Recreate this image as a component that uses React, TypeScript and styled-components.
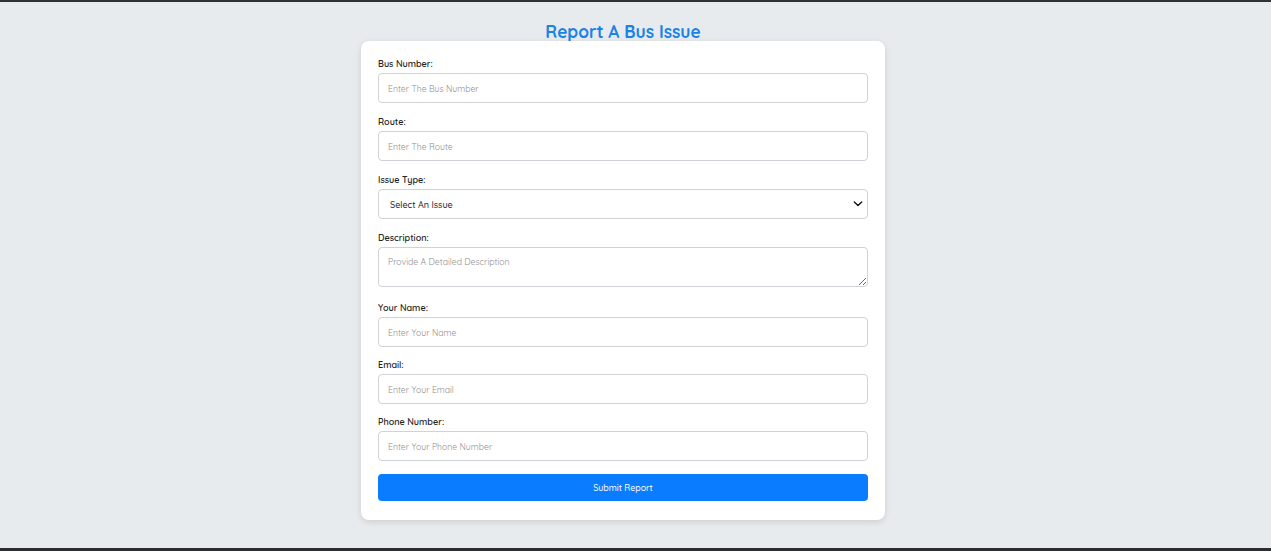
import React from "react";
import styled, { createGlobalStyle } from "styled-components";

const GlobalStyle = createGlobalStyle`
  html, body {
    margin: 0;
    padding: 0;
    background: #e8ebee;
    font-family: "Quicksand", Inter, "Noto Sans", sans-serif;
  }
  * { box-sizing: border-box; }
`;

const Page = styled.div`
  width: 1271px;
  height: 551px;
  display: flex;
  flex-direction: column;
  background: #e8ebee;
  border-top: 2px solid #2f3135;
  border-bottom: 3px solid #2a2c30;
  padding-right: 25px;
  overflow: hidden;
`;

const Main = styled.main`
  flex: 1;
  display: flex;
  flex-direction: column;
  align-items: center;
`;

const Title = styled.h1`
  margin: 20px 0 0;
  height: 19px;
  line-height: 19px;
  font-size: 17.3px;
  font-weight: 700;
  color: #1b82e6;
`;

const Card = styled.form`
  width: 524px;
  background: #fff;
  border-radius: 8px;
  box-shadow: 0 2px 6px rgba(0, 0, 0, 0.12);
  padding: 17px 17px 19px;
  display: flex;
  flex-direction: column;
`;

const Group = styled.div<{ $mb?: number }>`
  display: flex;
  flex-direction: column;
  margin-bottom: ${(p) => p.$mb ?? 13}px;
`;

const Label = styled.label`
  height: 12px;
  line-height: 12px;
  font-size: 9px;
  font-weight: 600;
  color: #222;
  margin-bottom: 3px;
`;

const fieldCss = `
  width: 100%;
  height: 30px;
  border: 1px solid #cfd2d6;
  border-radius: 4px;
  background: #fff;
  padding: 0 9px;
  font-family: inherit;
  font-size: 8.7px;
  color: #333;
  outline: none;
  &::placeholder { color: #8f8f8f; }
`;

const Input = styled.input`
  ${fieldCss}
`;

const TextArea = styled.textarea<{ $h: number }>`
  ${fieldCss}
  height: ${(p) => p.$h}px;
  padding: 8px 9px;
  resize: vertical;
  display: block;
`;

const SelectWrap = styled.div`
  position: relative;
  height: 30px;
`;

const Select = styled.select`
  ${fieldCss}
  appearance: none;
  padding: 0 11px;
  font-size: 9px;
  font-weight: 500;
  color: #1a1a1a;
`;

const Chevron = styled.svg`
  position: absolute;
  right: 5px;
  top: 11px;
  width: 10px;
  height: 8px;
  pointer-events: none;
`;

const Button = styled.button`
  height: 27px;
  margin-top: 1px;
  border: none;
  border-radius: 4px;
  background: #0a7cff;
  color: #fff;
  font-family: inherit;
  font-size: 8.8px;
  font-weight: 500;
  cursor: pointer;
`;

const fields: { label: string; placeholder: string }[] = [
  { label: "Your Name:", placeholder: "Enter Your Name" },
  { label: "Email:", placeholder: "Enter Your Email" },
  { label: "Phone Number:", placeholder: "Enter Your Phone Number" },
];

export default function App() {
  return (
    <>
      <GlobalStyle />
      <Page>
        <Main>
          <Title>Report A Bus Issue</Title>
          <Card onSubmit={(e) => e.preventDefault()}>
            <Group>
              <Label>Bus Number:</Label>
              <Input placeholder="Enter The Bus Number" />
            </Group>
            <Group>
              <Label>Route:</Label>
              <Input placeholder="Enter The Route" />
            </Group>
            <Group>
              <Label>Issue Type:</Label>
              <SelectWrap>
                <Select defaultValue="">
                  <option value="">Select An Issue</option>
                  <option value="delay">Delay</option>
                  <option value="cleanliness">Cleanliness</option>
                  <option value="other">Other</option>
                </Select>
                <Chevron viewBox="0 0 10 8">
                  <path d="M1.3 1.9 L5 5.5 L8.7 1.9" fill="none" stroke="#111" strokeWidth="1.4" strokeLinecap="round" strokeLinejoin="round" />
                </Chevron>
              </SelectWrap>
            </Group>
            <Group $mb={15}>
              <Label>Description:</Label>
              <TextArea $h={40} placeholder="Provide A Detailed Description" />
            </Group>
            {fields.map((f) => (
              <Group key={f.label} $mb={12}>
                <Label>{f.label}</Label>
                <Input placeholder={f.placeholder} />
              </Group>
            ))}
            <Button type="submit">Submit Report</Button>
          </Card>
        </Main>
      </Page>
    </>
  );
}
